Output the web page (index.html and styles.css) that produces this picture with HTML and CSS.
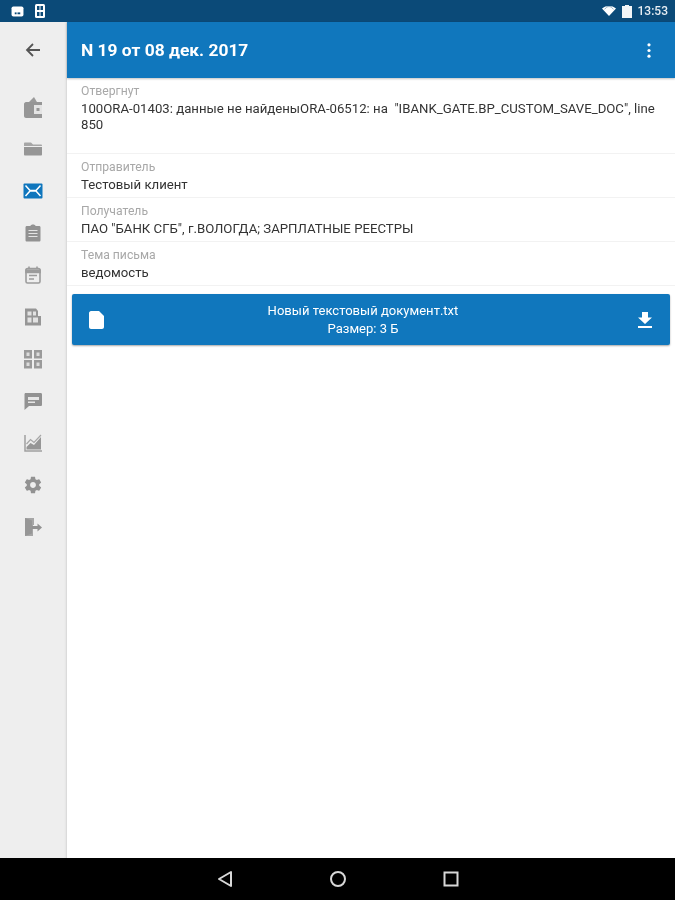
FILE: index.html
```html
<!DOCTYPE html>
<html lang="ru">
<head>
<meta charset="utf-8">
<title>N 19 от 08 дек. 2017</title>
<link rel="stylesheet" href="styles.css">
</head>
<body>
<div class="app">
  <div class="status">
    <div class="status-left">
      <svg class="s-ico" width="13" height="11" viewBox="0 0 14 12"><rect x="0.5" y="0.5" width="13" height="11" rx="2" fill="#fff"/><rect x="4" y="7" width="2" height="2" fill="#0b4a78"/><rect x="7" y="7" width="3" height="2" fill="#0b4a78"/></svg>
      <svg class="s-ico" width="10" height="14" viewBox="0 0 10 14"><rect width="10" height="14" rx="1.5" fill="#fff"/><rect x="2" y="2" width="2.5" height="4" fill="#0b4a78"/><rect x="5.5" y="2" width="2.5" height="4" fill="#0b4a78"/><rect x="2" y="8" width="2.5" height="4" fill="#0b4a78"/><rect x="5.5" y="8" width="2.5" height="4" fill="#0b4a78"/></svg>
    </div>
    <div class="status-right">
      <svg width="14" height="10" viewBox="0 0 14 10"><path d="M0 2.5C4-.8 10-.8 14 2.5L7 10Z" fill="#fff"/><path d="M2.6 3.4C5-.4 9-.4 11.4 3.4" fill="none" stroke="#0b4a78" stroke-width="0.8" opacity="0.5"/></svg>
      <svg width="10" height="13" viewBox="0 0 10 13"><path d="M3 0H7V1H10V13H0V1H3Z" fill="#f2f5f7"/></svg>
      <span class="clock">13:53</span>
    </div>
  </div>
  <div class="main">
    <nav class="side">
      <div class="back">
        <svg width="18" height="18" viewBox="0 0 18 18"><path d="M16 9H3M9 3 3 9l6 6" fill="none" stroke="#555" stroke-width="1.8"/></svg>
      </div>
      <div class="side-list">
        <div class="side-item"><svg width="20" height="22" viewBox="0 0 20 22"><path d="M5 7 11 1 14.500 7Z" fill="#9a9a9a"/><path d="M1 8C1 7 2 6 3 6H19V22H3C2 22 1 21 1 20Z" fill="#969696"/><rect x="11" y="9" width="8" height="9" fill="#e4e4e4"/><rect x="13.500" y="12" width="3" height="3" fill="#969696"/></svg></div>
        <div class="side-item"><svg width="20" height="20" viewBox="0 0 20 20"><path d="M1 4.500C1 4 1.500 3.500 2 3.500H8L10 5.500H18C18.500 5.500 19 6 19 6.500V7H1Z" fill="#a6a6a6"/><path d="M1 8H19V15.500C19 16 18.500 16.500 18 16.500H2C1.500 16.500 1 16 1 15.500Z" fill="#969696"/></svg></div>
        <div class="side-item"><svg width="20" height="16" viewBox="0 0 20 16"><rect width="19" height="15" x="0.500" y="0.500" rx="1" fill="#0f76bd"/><path d="M2.500 2.500 7 7.500H13L17.500 2.500M2.500 13 7 8H13L17.500 13" fill="none" stroke="#fff" stroke-width="1.500"/></svg></div>
        <div class="side-item"><svg width="20" height="20" viewBox="0 0 20 20"><path d="M4 3H7.500C7.500 1 12.500 1 12.500 3H16C17 3 17.500 3.500 17.500 4.500V17C17.500 18 17 18.500 16 18.500H4C3 18.500 2.500 18 2.500 17V4.500C2.500 3.500 3 3 4 3Z" fill="#929292"/><path d="M5.500 7.500H14.500M5.500 10.500H14.500M5.500 13.500H14.500" stroke="#e4e4e4" stroke-width="1.200"/></svg></div>
        <div class="side-item"><svg width="20" height="20" viewBox="0 0 20 20"><rect x="3" y="3.500" width="14" height="14.500" rx="1.500" fill="#eee" stroke="#9c9c9c" stroke-width="1.600"/><path d="M3 5H17V7.500H3ZM6 1.500V4M14 1.500V4" stroke="#9c9c9c" stroke-width="1.600" fill="#9c9c9c"/><path d="M6 10.500H14M6 14H11" stroke="#9c9c9c" stroke-width="1.300"/></svg></div>
        <div class="side-item"><svg width="20" height="20" viewBox="0 0 20 20"><path d="M2 1.500H13L15 4V9H18V18.500H2Z" fill="#969696"/><path d="M4.500 4.500H8.500V8.500H4.500ZM10 4.500H13V8.500H10ZM4.500 10.500H8.500V15.500H4.500ZM10 10.500H15V15.500H10Z" fill="#e2e2e2"/></svg></div>
        <div class="side-item"><svg width="20" height="20" viewBox="0 0 20 20"><path d="M1 1H9V9.500H1ZM11 1H19V9.500H11ZM1 11H9V19.500H1ZM11 11H19V19.500H11Z" fill="#9a9a9a"/><path d="M3.500 3.500H6.500V7H3.500ZM13.500 3.500H16.500V7H13.500ZM3.500 13.500H6.500V17H3.500ZM13.500 13.500H16.500V17H13.500Z" fill="#dcdcdc"/></svg></div>
        <div class="side-item"><svg width="20" height="20" viewBox="0 0 20 20"><path d="M2.500 2H17.500C18.500 2 19 2.500 19 3.500V13.500C19 14.500 18.500 15 17.500 15H6L1.500 19V3.500C1.500 2.500 2 2 2.500 2Z" fill="#929292"/><path d="M5 6H16V9H5ZM5 10.500H12V12H5Z" fill="#e6e6e6"/></svg></div>
        <div class="side-item"><svg width="20" height="20" viewBox="0 0 20 20"><path d="M2 2V18H19" fill="none" stroke="#a0a0a0" stroke-width="1.500"/><path d="M3.500 16.500V14L7.500 10 11 12 18 4V16.500Z" fill="#969696"/><path d="M3.500 11 7.500 6.500 11 9.500 18 2" fill="none" stroke="#a6a6a6" stroke-width="1.200"/></svg></div>
        <div class="side-item"><svg width="20" height="20" viewBox="0 0 24 24"><path fill="#929292" d="M19.430 12.980c.04-.32.070-.64.070-.98s-.030-.66-.070-.98l2.110-1.650c.19-.15.240-.42.120-.64l-2-3.460c-.12-.22-.39-.3-.61-.22l-2.490 1c-.52-.4-1.080-.73-1.690-.98l-.38-2.650C14.460 2.180 14.250 2 14 2h-4c-.25 0-.46.18-.49.420l-.38 2.650c-.61.25-1.170.59-1.690.98l-2.490-1c-.23-.09-.49 0-.61.220l-2 3.460c-.13.22-.07.49.120.64l2.110 1.650c-.04.32-.070.65-.070.98s.030.66.070.98l-2.110 1.650c-.19.15-.24.42-.12.64l2 3.460c.12.22.39.3.61.22l2.490-1c.52.4 1.080.73 1.690.98l.38 2.650c.03.24.24.42.49.42h4c.25 0 .46-.18.49-.42l.38-2.650c.61-.25 1.170-.59 1.690-.98l2.490 1c.23.09.49 0 .61-.22l2-3.460c.12-.22.070-.49-.12-.64l-2.110-1.650zM12 15.500c-1.930 0-3.500-1.570-3.500-3.500s1.570-3.500 3.500-3.500 3.500 1.570 3.500 3.500-1.570 3.500-3.500 3.500z"/></svg></div>
        <div class="side-item"><svg width="20" height="20" viewBox="0 0 20 20"><path d="M2 1H11V8H10V19H2Z" fill="#a6a6a6"/><path d="M2 1 9 3.500V16.500L2 19Z" fill="#969696"/><path d="M9 9H14.500V6.500L19 10.500 14.500 14.500V12H9Z" fill="#929292"/></svg></div>
      </div>
    </nav>
    <div class="content">
      <header class="bar">
        <h1 class="title">N 19 от 08 дек. 2017</h1>
        <svg class="more" width="4" height="15" viewBox="0 0 4 15"><circle cx="2" cy="1.800" r="1.600" fill="#fff"/><circle cx="2" cy="7.500" r="1.600" fill="#fff"/><circle cx="2" cy="13.200" r="1.600" fill="#fff"/></svg>
      </header>
      <section class="fields">
        <div class="field field-tall">
          <div class="label">Отвергнут</div>
          <div class="value">100ORA-01403: данные не найденыORA-06512: на &nbsp;"IBANK_GATE.BP_CUSTOM_SAVE_DOC", line 850</div>
        </div>
        <div class="field">
          <div class="label">Отправитель</div>
          <div class="value">Тестовый клиент</div>
        </div>
        <div class="field">
          <div class="label">Получатель</div>
          <div class="value">ПАО "БАНК СГБ", г.ВОЛОГДА; ЗАРПЛАТНЫЕ РЕЕСТРЫ</div>
        </div>
        <div class="field">
          <div class="label">Тема письма</div>
          <div class="value">ведомость</div>
        </div>
      </section>
      <div class="file">
        <svg width="15" height="18" viewBox="0 0 15 18"><path d="M2 0H10L15 5V16C15 17 14 18 13 18H2C1 18 0 17 0 16V2C0 1 1 0 2 0Z" fill="#fff"/></svg>
        <div class="file-text">
          <div>Новый текстовый документ.txt</div>
          <div>Размер: 3 Б</div>
        </div>
        <svg width="14" height="16" viewBox="0 0 14 16"><path d="M4 0H10V5.500H14L7 12 0 5.500H4ZM0 14H14V16H0Z" fill="#fff"/></svg>
      </div>
    </div>
  </div>
  <div class="navbar">
    <svg width="16" height="18" viewBox="0 0 16 18"><path d="M14 2V16L2 9Z" fill="none" stroke="#d8d8d8" stroke-width="2" stroke-linejoin="round"/></svg>
    <svg width="18" height="18" viewBox="0 0 18 18"><circle cx="9" cy="9" r="7" fill="none" stroke="#d8d8d8" stroke-width="2"/></svg>
    <svg width="16" height="16" viewBox="0 0 16 16"><rect x="1.500" y="1.500" width="13" height="13" fill="none" stroke="#d8d8d8" stroke-width="2"/></svg>
  </div>
</div>
</body>
</html>
```
FILE: styles.css
```css
* { box-sizing: border-box; }
html, body { margin: 0; height: 100%; }
body { font-family: Roboto, "Liberation Sans", sans-serif; background: #fff; }
.app { width: 675px; height: 900px; display: flex; flex-direction: column; overflow: hidden; filter: blur(0.5px); }
.status { height: 22px; flex: none; background: #0b4a78; display: flex; justify-content: space-between; align-items: center; padding: 0 7px 0 11px; }
.status-left { display: flex; align-items: center; gap: 11px; }
.status-right { display: flex; align-items: center; gap: 6px; }
.clock { font-size: 12px; font-weight: 500; color: #e8eef3; }
.main { flex: 1; display: flex; min-height: 0; }
.side { width: 67px; flex: none; background: #eeeeee; box-shadow: inset -3px 0 2px -2px #d4d4d4; }
.back { height: 56px; display: flex; align-items: center; justify-content: center; padding-right: 2px; }
.side-list { padding-top: 8px; display: flex; flex-direction: column; }
.side-item { height: 42px; display: flex; align-items: center; justify-content: center; padding-right: 2px; }
.content { flex: 1; min-width: 0; }
.bar { height: 56px; background: #1077bd; display: flex; align-items: center; justify-content: space-between; padding: 0 24px 0 14px; box-shadow: 0 1px 2px rgba(0,0,0,.25); }
.title { margin: 0; font-size: 17.400px; font-weight: 700; color: #fff; }
.fields { display: flex; flex-direction: column; }
.field { height: 44px; padding: 6px 14px 0; border-bottom: 1px solid #f2f2f2; }
.field-tall { height: 76px; }
.label { font-size: 12.200px; line-height: 15px; color: #a8a8a8; }
.value { font-size: 13.200px; line-height: 16px; color: #333; margin-top: 2px; }
.file { margin: 8px 5px 0; height: 51px; background: #1077bd; border-radius: 2px; box-shadow: 0 1px 2px rgba(0,0,0,.35); display: flex; align-items: center; padding: 0 18px 0 17px; }
.file-text { flex: 1; margin-right: 16px; color: #fff; font-size: 13.050px; line-height: 18px; text-align: center; }
.navbar { height: 42px; flex: none; background: #000; display: flex; align-items: center; justify-content: center; gap: 96px; }
```
